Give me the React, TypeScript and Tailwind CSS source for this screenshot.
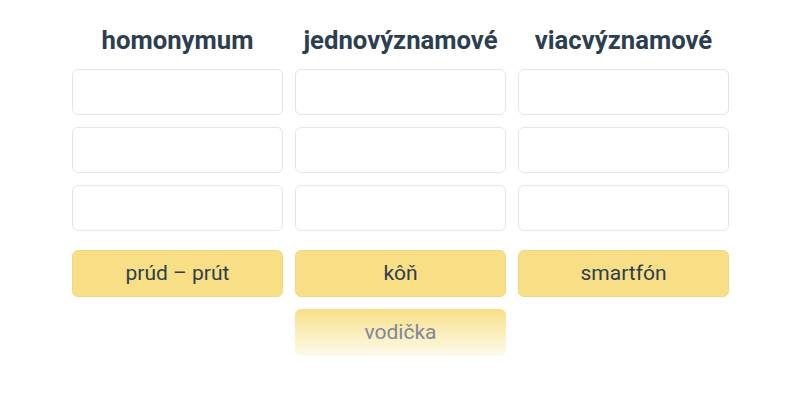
export default function App() {
  const columns = [
    { title: "homonymum", chips: ["prúd – prút"] },
    { title: "jednovýznamové", chips: ["kôň", "vodička"] },
    { title: "viacvýznamové", chips: ["smartfón"] },
  ];

  return (
    <div className="w-[800px] h-[400px] bg-white font-['Roboto',sans-serif] text-[#2c3e50]">
      <div className="flex justify-center gap-3 pt-[24px] pl-[1px]">
        {columns.map((col) => (
          <div key={col.title} className="w-[211px] flex flex-col">
            <h2 className="h-[32px] text-center text-[25.7px] font-bold leading-[32px] whitespace-nowrap">
              {col.title}
            </h2>
            <div className="mt-[13px] flex flex-col gap-3">
              {[0, 1, 2].map((i) => (
                <div key={i} className="h-[46px] rounded-md border border-[#e1e6eb] bg-white" />
              ))}
            </div>
            <div className="mt-[19px] flex flex-col gap-3">
              {col.chips.map((chip) =>
                chip === "vodička" ? (
                  <div
                    key={chip}
                    className="h-[47px] rounded-md bg-gradient-to-b from-[#f8df85] to-[#fefaea] flex items-center justify-center text-[21px] text-[#7d8894]"
                  >
                    {chip}
                  </div>
                ) : (
                  <div
                    key={chip}
                    className="h-[47px] rounded-md bg-[#f8df85] border border-[#f3d87a] flex items-center justify-center text-[21px]"
                  >
                    {chip}
                  </div>
                )
              )}
            </div>
          </div>
        ))}
      </div>
    </div>
  );
}
